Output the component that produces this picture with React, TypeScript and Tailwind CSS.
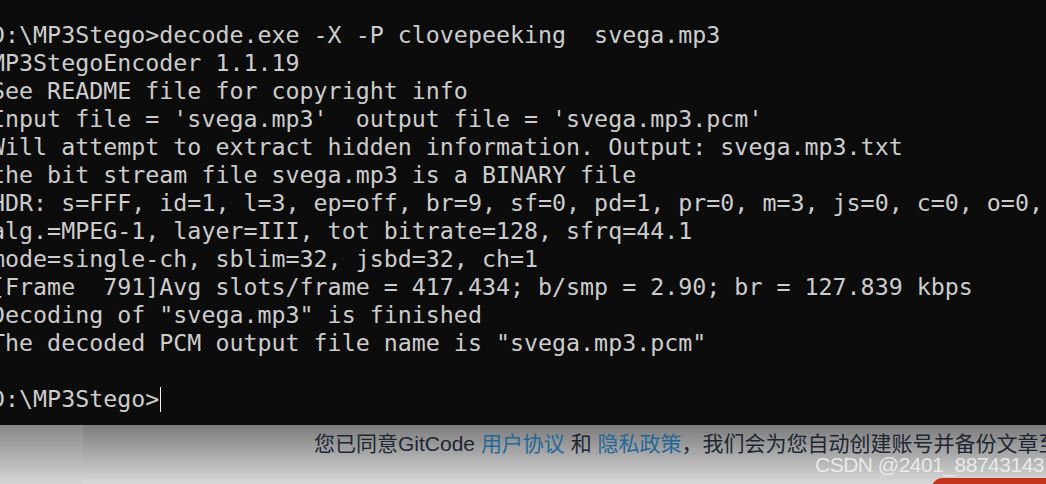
import React from 'react';

const LINES = [
  'D:\\MP3Stego>decode.exe -X -P clovepeeking  svega.mp3',
  'MP3StegoEncoder 1.1.19',
  'See README file for copyright info',
  "Input file = 'svega.mp3'  output file = 'svega.mp3.pcm'",
  'Will attempt to extract hidden information. Output: svega.mp3.txt',
  'the bit stream file svega.mp3 is a BINARY file',
  'HDR: s=FFF, id=1, l=3, ep=off, br=9, sf=0, pd=1, pr=0, m=3, js=0, c=0, o=0, e=0',
  'alg.=MPEG-1, layer=III, tot bitrate=128, sfrq=44.1',
  'mode=single-ch, sblim=32, jsbd=32, ch=1',
  '[Frame  791]Avg slots/frame = 417.434; b/smp = 2.90; br = 127.839 kbps',
  'Decoding of "svega.mp3" is finished',
  'The decoded PCM output file name is "svega.mp3.pcm"',
  '',
];

export default function App() {
  return (
    <div className="w-[1046px] h-[484px] overflow-hidden flex flex-col bg-[#0c0c0c]">
      {/* console */}
      <div
        className="h-[425px] shrink-0 pt-[21px] ml-[-9px] text-[#cccccc] text-[23.3px] leading-[28px] whitespace-pre"
        style={{ fontFamily: '"DejaVu Sans Mono", monospace' }}
      >
        {LINES.map((l, i) => (
          <div key={i} className="h-[28px]">{l}</div>
        ))}
        <div className="h-[28px] flex items-center">
          <span>D:\MP3Stego&gt;</span>
          <span className="w-px h-[25px] bg-[#f2f2f2] ml-[1px]" />
        </div>
      </div>

      {/* cookie bar behind dim overlay */}
      <div className="relative flex-1 flex bg-gradient-to-b from-[#7c7c7c] to-[#dadada]">
        <div className="w-[83px] bg-gradient-to-b from-[#888888] to-[#d4d6d8]" />
        <div className="flex-1 relative">
          <div
            className="absolute left-[231px] top-[6px] whitespace-nowrap text-[21px] leading-[26px] text-[#1d2733]"
            style={{ fontFamily: '"Liberation Sans", "Noto Sans CJK SC", sans-serif' }}
          >
            您已同意GitCode <span className="text-[#24689a]">用户协议</span> 和{' '}
            <span className="text-[#24689a]">隐私政策</span>，我们会为您自动创建账号并备份文章至
          </div>
          <div
            className="absolute left-[732px] top-[27px] whitespace-nowrap text-[21px] leading-[26px] tracking-[-0.5px] text-[#f0f0f0]/90"
            style={{ fontFamily: '"Liberation Sans", sans-serif' }}
          >
            CSDN @2401_88743143
          </div>
          <div className="absolute left-[849px] top-[53px] w-[140px] h-[12px] rounded-tl-[10px] bg-[#c2341d]" />
        </div>
      </div>
    </div>
  );
}
